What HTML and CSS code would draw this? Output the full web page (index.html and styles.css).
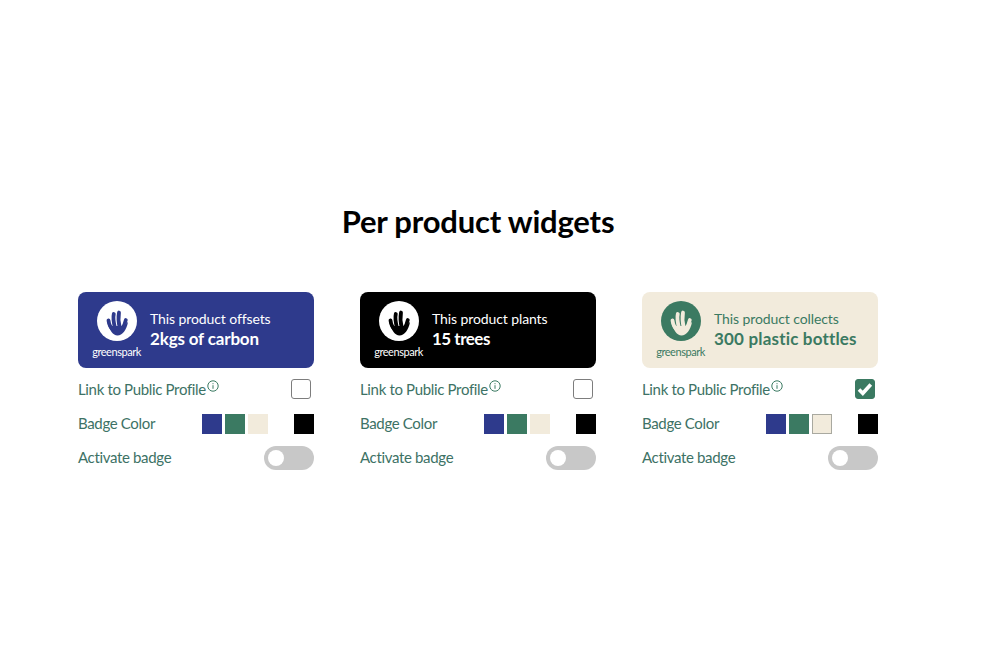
FILE: index.html
```html
<!doctype html>
<html>
<head>
<meta charset="utf-8">
<title>Per product widgets</title>
<link rel="stylesheet" href="styles.css">
</head>
<body>

<svg class="defs" width="0" height="0" aria-hidden="true">
  <symbol id="gsMark" viewBox="0 0 40 40">
    <!-- palm -->
    <path class="mark-palm" d="M10.500 22C12.500 29 16 34.500 20.500 34.500 25.500 34.500 29.500 29 31 21L26 25H15Z"/>
    <!-- fingers -->
    <path class="mark-finger" d="M11.500 19.500C12 23 13 26 15.500 28M16.800 13C15.800 17 16.500 21 18 27M22 11.500C21 17 21.500 22 22.800 27M28.800 19C28.200 22 27 25 25 28"/>
  </symbol>
</svg>

<main class="page">
  <h1 class="title">Per product widgets</h1>

  <section class="widgets">

    <article class="widget">
      <div class="badge badge-blue">
        <div class="brand">
          <span class="brand-circle"><svg><use href="#gsMark"/></svg></span>
          <span class="brand-name">greenspark</span>
        </div>
        <p class="badge-text">This product offsets<strong>2kgs of carbon</strong></p>
      </div>
      <div class="row row-link">
        <span class="label">Link to Public Profile<svg class="info" viewBox="0 0 12 12"><circle cx="6" cy="6" r="5.200"/><path d="M6 5.200v3.600M6 3.200v1"/></svg></span>
        <span class="check"></span>
      </div>
      <div class="row row-color">
        <span class="label">Badge Color</span>
        <span class="swatches">
          <i class="swatch s-blue"></i><i class="swatch s-green"></i><i class="swatch s-cream"></i><i class="swatch s-white"></i><i class="swatch s-black"></i>
        </span>
      </div>
      <div class="row row-active">
        <span class="label">Activate badge</span>
        <span class="toggle"><i class="knob"></i></span>
      </div>
    </article>

    <article class="widget">
      <div class="badge badge-black">
        <div class="brand">
          <span class="brand-circle"><svg><use href="#gsMark"/></svg></span>
          <span class="brand-name">greenspark</span>
        </div>
        <p class="badge-text">This product plants<strong>15 trees</strong></p>
      </div>
      <div class="row row-link">
        <span class="label">Link to Public Profile<svg class="info" viewBox="0 0 12 12"><circle cx="6" cy="6" r="5.200"/><path d="M6 5.200v3.600M6 3.200v1"/></svg></span>
        <span class="check"></span>
      </div>
      <div class="row row-color">
        <span class="label">Badge Color</span>
        <span class="swatches">
          <i class="swatch s-blue"></i><i class="swatch s-green"></i><i class="swatch s-cream"></i><i class="swatch s-white"></i><i class="swatch s-black"></i>
        </span>
      </div>
      <div class="row row-active">
        <span class="label">Activate badge</span>
        <span class="toggle"><i class="knob"></i></span>
      </div>
    </article>

    <article class="widget">
      <div class="badge badge-cream">
        <div class="brand">
          <span class="brand-circle"><svg><use href="#gsMark"/></svg></span>
          <span class="brand-name">greenspark</span>
        </div>
        <p class="badge-text">This product collects<strong>300 plastic bottles</strong></p>
      </div>
      <div class="row row-link">
        <span class="label">Link to Public Profile<svg class="info" viewBox="0 0 12 12"><circle cx="6" cy="6" r="5.200"/><path d="M6 5.200v3.600M6 3.200v1"/></svg></span>
        <span class="check checked"><svg viewBox="0 0 20 20"><path d="M4 10.500l3.800 3.800 8-8.800"/></svg></span>
      </div>
      <div class="row row-color">
        <span class="label">Badge Color</span>
        <span class="swatches">
          <i class="swatch s-blue"></i><i class="swatch s-green"></i><i class="swatch s-cream on"></i><i class="swatch s-white"></i><i class="swatch s-black"></i>
        </span>
      </div>
      <div class="row row-active">
        <span class="label">Activate badge</span>
        <span class="toggle"><i class="knob"></i></span>
      </div>
    </article>

  </section>
</main>

</body>
</html>
```

FILE: styles.css
```css
/* ---------- page ---------- */
html,body{margin:0;background:#fff}
body{font-family:"Lato","Open Sans",sans-serif;color:#3b7a62}
.defs{position:absolute}

.page{
  width:800px;
  margin-left:78px;
  padding-top:203px;
}
.title{
  margin:0 0 53px;
  font-size:31px;
  line-height:36px;
  font-weight:700;
  color:#000;
  text-align:center;
  letter-spacing:-.2px;
}

/* ---------- three columns ---------- */
.widgets{display:flex;gap:46px}
.widget{width:236px}

/* ---------- badge ---------- */
.badge{
  display:flex;
  align-items:center;
  gap:9px;
  height:76px;
  padding:0 15px 2px 14px;
  box-sizing:border-box;
  border-radius:8px;
}
.badge-blue {background:#2e3a8c;color:#fff}
.badge-black{background:#000;color:#fff}
.badge-cream{background:#f2ebdc;color:#3b7a62}

.brand{display:flex;flex-direction:column;align-items:center;width:49px;flex:none}
.brand-circle{
  display:block;
  width:40px;height:40px;
  border-radius:50%;
  background:#fff;
}
.brand-circle svg{display:block;width:40px;height:40px}
.mark-finger{fill:none;stroke-width:3.800;stroke-linecap:round}
.mark-palm{stroke:none}
.badge-blue .brand-circle svg{fill:#2e3a8c;stroke:#2e3a8c}
.badge-black .brand-circle svg{fill:#000;stroke:#000}
.badge-cream .brand-circle{background:#3b7a62}
.badge-cream .brand-circle svg{fill:#f2ebdc;stroke:#f2ebdc}
.brand-name{font-size:11px;line-height:13px;margin-top:4px;letter-spacing:-.45px}

.badge-text{margin:0;font-size:14px;line-height:20px;letter-spacing:-.1px}
.badge-text strong{display:block;font-size:17px;font-weight:700}
.badge-blue strong{letter-spacing:-.16px}
.badge-black strong{letter-spacing:-.5px}
.badge-cream strong{letter-spacing:.18px}

/* ---------- rows ---------- */
.row{display:flex;align-items:center;justify-content:space-between}
.row-link{margin-top:11px;height:20px}
.row-color{margin-top:15px;height:20px}
.row-active{margin-top:12px;height:24px}
.label{
  font-size:15px;
  line-height:18px;
  letter-spacing:-.34px;
  color:#3d7265;
  margin-top:-2px;
}
.row-link .label{margin-top:0}

.info{
  width:12px;height:12px;
  margin-left:1px;
  vertical-align:3px;
  fill:none;
  stroke:#3b7a62;
  stroke-width:1;
}

.check{
  display:block;
  width:20px;height:20px;
  margin-right:3px;
  box-sizing:border-box;
  border:1px solid #7d7d7d;
  border-radius:3px;
  background:#fff;
}
.check.checked{background:#3b7a62;border-color:#3b7a62}
.check svg{display:block;width:20px;height:20px;margin:-1px;fill:none;stroke:#fff;stroke-width:3.600}

.swatches{display:flex;gap:3px}
.swatch{display:block;width:20px;height:20px;box-sizing:border-box}
.s-blue {background:#2e3a8c}
.s-green{background:#3b7a62}
.s-cream{background:#f2ebdc}
.s-white{background:#fff}
.s-black{background:#000}
.swatch.on{border:1px solid #a9a9a0}

.toggle{
  display:block;
  width:50px;height:24px;
  padding:4px;
  box-sizing:border-box;
  border-radius:12px;
  background:#c8c8c8;
}
.knob{display:block;width:16px;height:16px;border-radius:50%;background:#fff}
```
